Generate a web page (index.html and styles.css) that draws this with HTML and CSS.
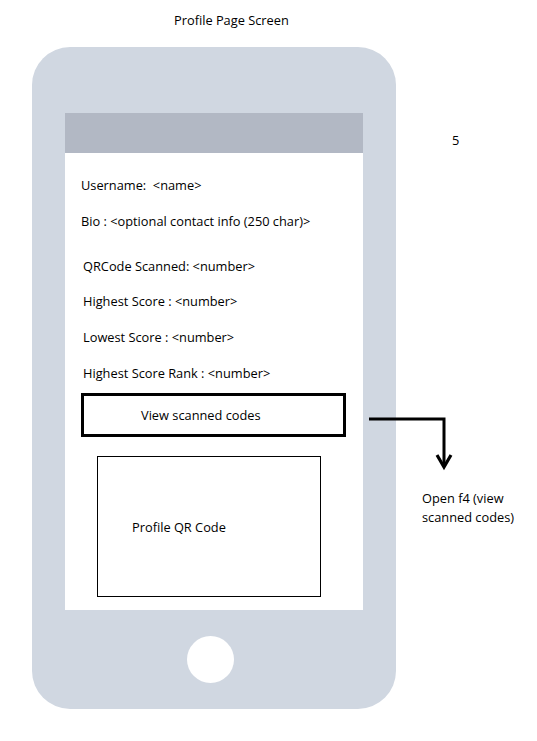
FILE: index.html
```html
<!DOCTYPE html>
<html>
<head>
<meta charset="utf-8">
<link rel="stylesheet" href="styles.css">
</head>
<body>
<div class="canvas">
  <div class="title">Profile Page Screen</div>
  <div class="phone">
    <div class="screen">
      <div class="statusbar"></div>
      <div class="content">
        <div class="row r-user">Username:&nbsp; &lt;name&gt;</div>
        <div class="row r-bio">Bio : &lt;optional contact info (250 char)&gt;</div>
        <div class="row r-qr">QRCode Scanned: &lt;number&gt;</div>
        <div class="row r-high">Highest Score : &lt;number&gt;</div>
        <div class="row r-low">Lowest Score : &lt;number&gt;</div>
        <div class="row r-rank">Highest Score Rank : &lt;number&gt;</div>
        <div class="btn"><span>View scanned codes</span></div>
        <div class="qrbox"><span>Profile QR Code</span></div>
      </div>
    </div>
    <div class="home"></div>
  </div>
  <div class="note-num">5</div>
  <svg class="arrow" width="90" height="60" viewBox="0 0 90 60">
    <path d="M0 5 H75 V53" fill="none" stroke="#000" stroke-width="3"/>
    <path d="M68 41 L75 53 L82 41" fill="none" stroke="#000" stroke-width="3.2" stroke-linejoin="miter"/>
  </svg>
  <div class="note-open">Open f4 (view<br>scanned codes)</div>
</div>
</body>
</html>
```
FILE: styles.css
```css
html, body {
  margin: 0;
  padding: 0;
  background: #fff;
}
body {
  font-family: "Open Sans", "DejaVu Sans", sans-serif;
  font-size: 12.8px;
  color: #000;
}
.canvas {
  position: relative;
  width: 537px;
  height: 741px;
  overflow: hidden;
}
.title {
  padding: 12px 0 0 174px;
  height: 23px;
  line-height: 16px;
}
.phone {
  margin-left: 32px;
  margin-top: 12px;
  width: 364px;
  height: 662px;
  border-radius: 38px;
  background: #d0d7e1;
  padding-top: 66px;
  box-sizing: border-box;
  display: flex;
  flex-direction: column;
  align-items: center;
}
.screen {
  width: 298px;
  height: 497px;
  background: #fff;
  display: flex;
  flex-direction: column;
}
.statusbar {
  height: 40px;
  background: #b2b8c4;
}
.content {
  display: flex;
  flex-direction: column;
  padding-left: 16px;
}
.row {
  height: 16px;
  line-height: 16px;
  white-space: nowrap;
}
.r-user { margin-top: 24px; }
.r-bio { margin-top: 20px; }
.r-qr { margin-top: 29px; padding-left: 2px; }
.r-high { margin-top: 19px; padding-left: 2px; }
.r-low { margin-top: 20px; padding-left: 2px; }
.r-rank { margin-top: 20px; padding-left: 2px; }
.btn {
  margin-top: 12px;
  width: 265px;
  height: 44px;
  box-sizing: border-box;
  border: 3px solid #000;
  display: flex;
  align-items: center;
  padding-left: 57px;
}
.qrbox {
  margin-top: 19px;
  margin-left: 16px;
  width: 224px;
  height: 141px;
  box-sizing: border-box;
  border: 1.5px solid #000;
  display: flex;
  align-items: center;
  padding-left: 34px;
}
.home {
  margin-top: 26px;
  margin-right: 7px;
  width: 47px;
  height: 47px;
  border-radius: 50%;
  background: #fff;
}
.note-num {
  position: absolute;
  left: 452px;
  top: 132px;
  line-height: 16px;
}
.arrow {
  position: absolute;
  left: 369px;
  top: 414px;
}
.note-open {
  position: absolute;
  left: 422px;
  top: 489px;
  line-height: 19px;
}
```
